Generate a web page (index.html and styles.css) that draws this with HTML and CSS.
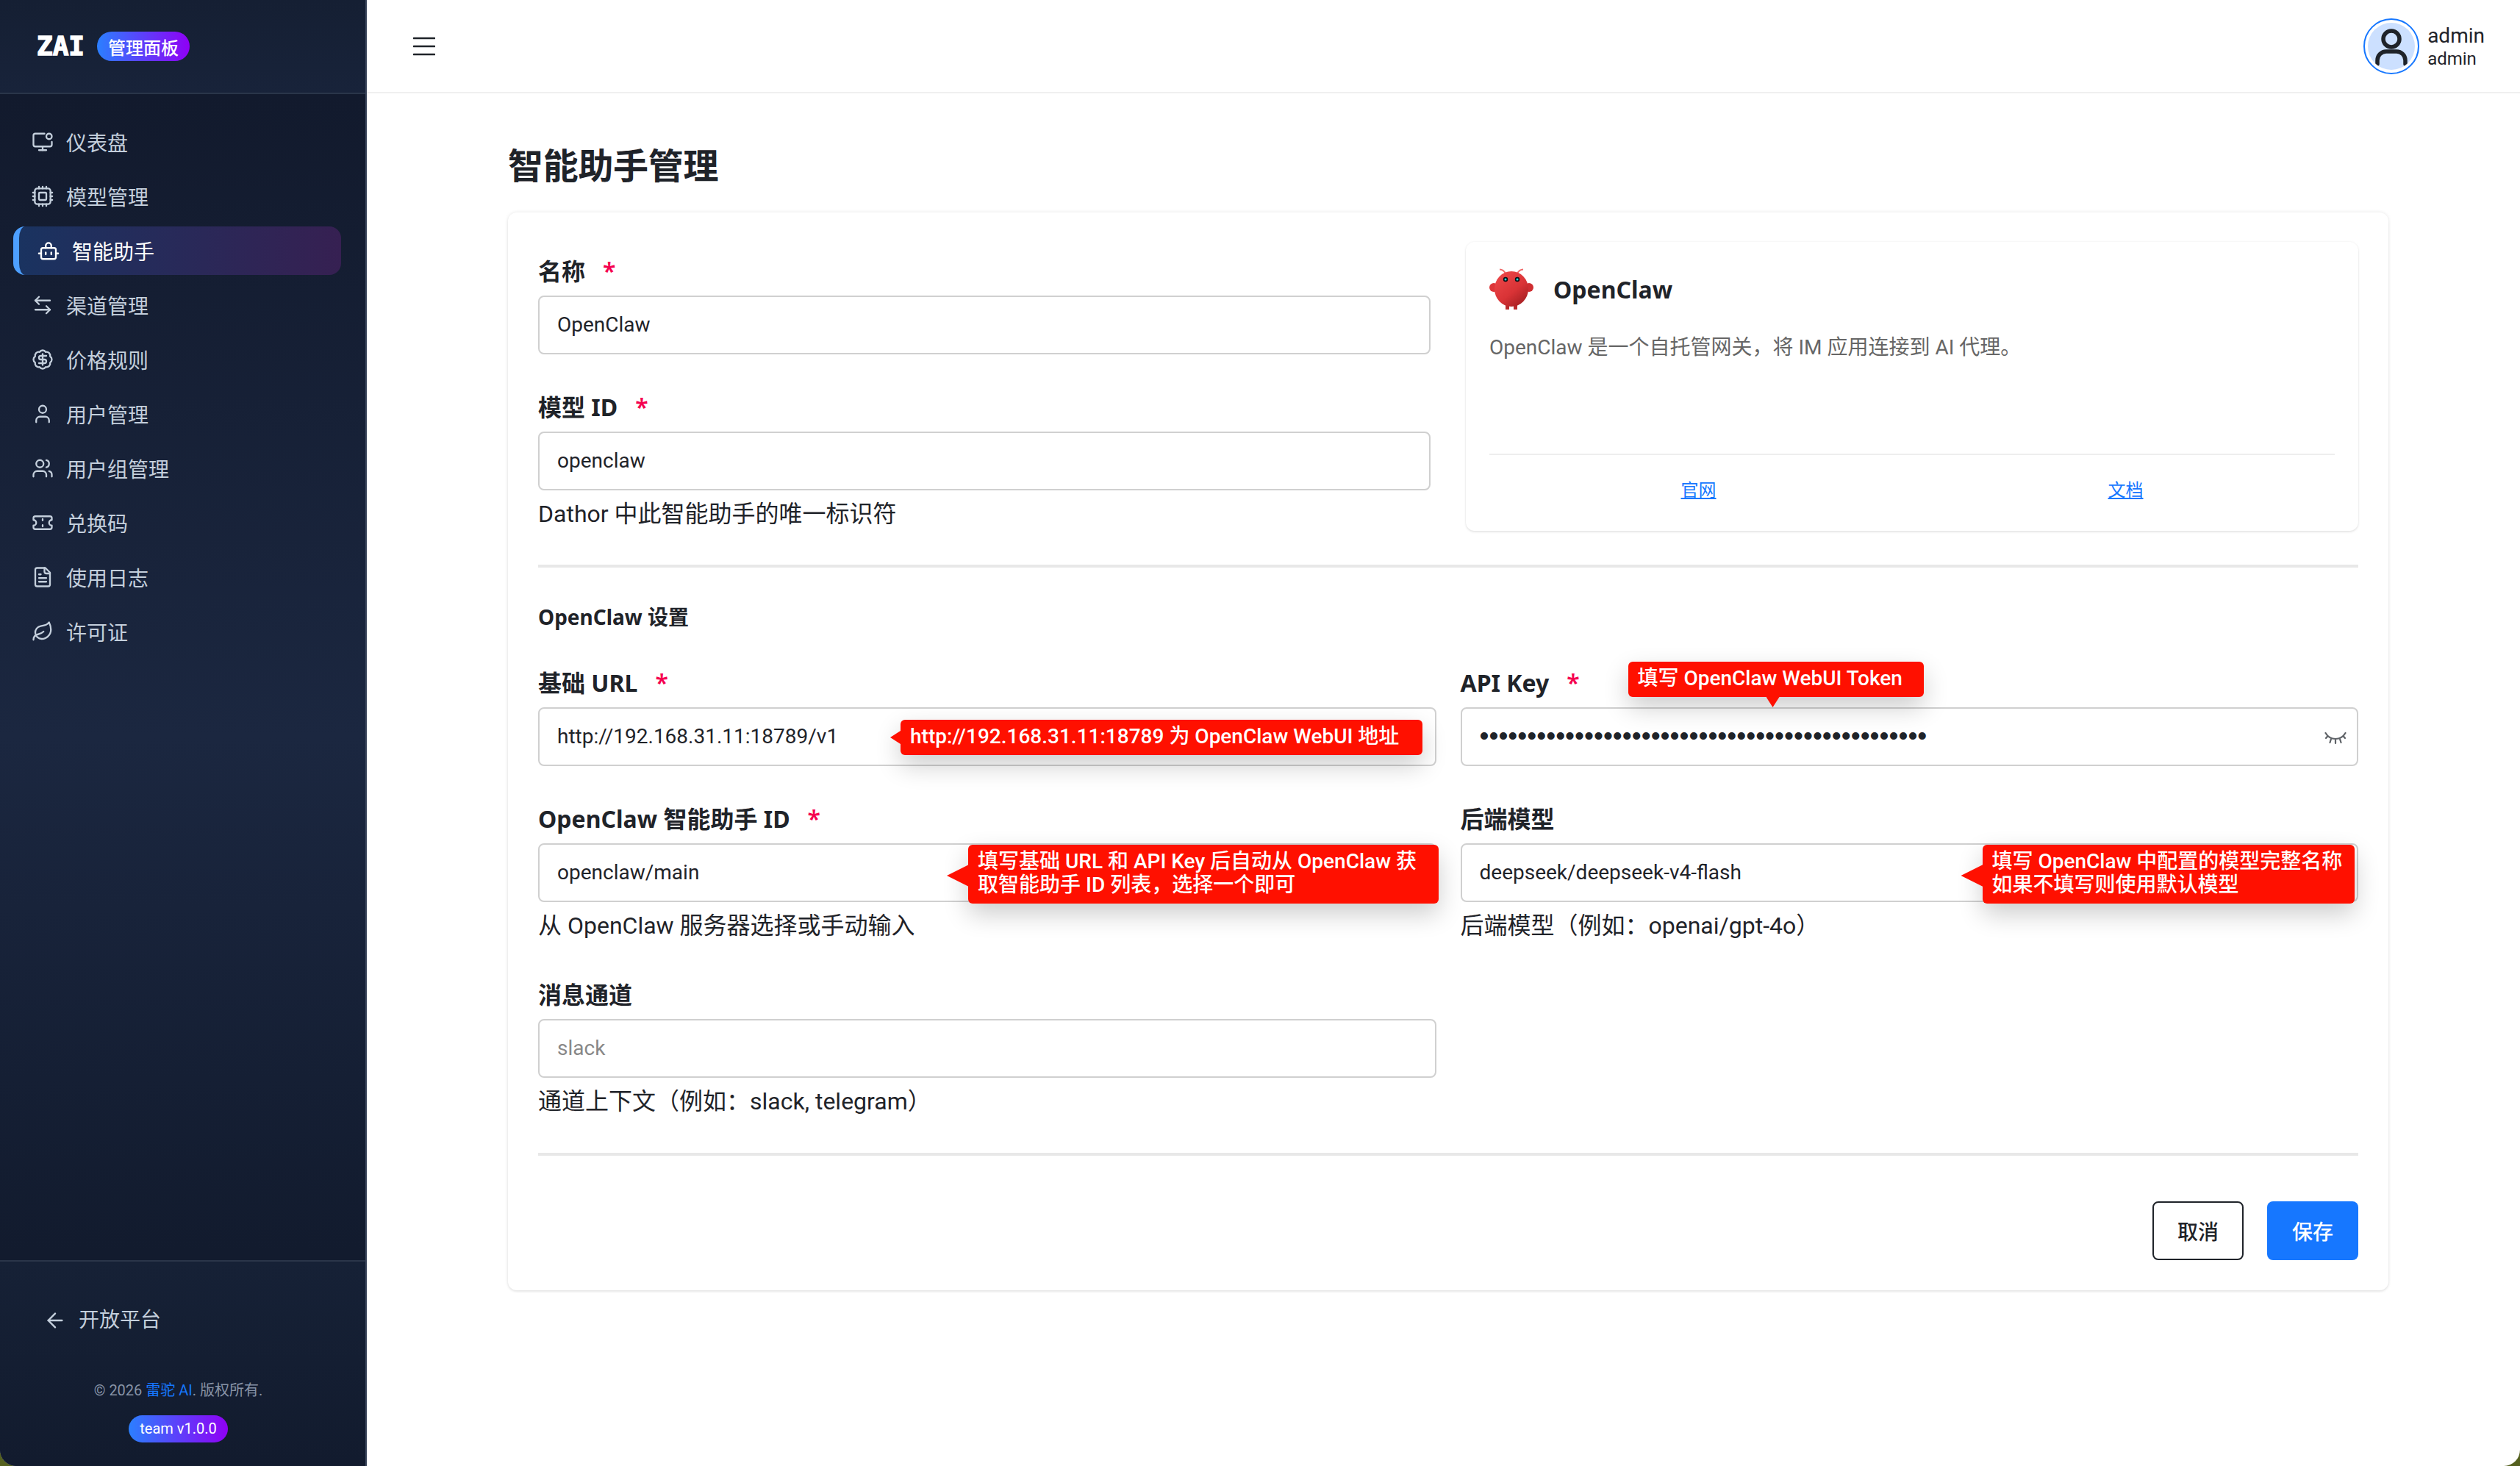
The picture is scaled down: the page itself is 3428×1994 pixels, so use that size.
FILE: index.html
```html
<!DOCTYPE html>
<html lang="zh-CN">
<head>
    <meta charset="UTF-8">
    <title>智能助手管理</title>
    <link rel="stylesheet" href="styles.css">
</head>
<body>
    <div class="app">
        <aside class="sidebar">
            <div class="brand">
                <span class="brand-logo">ZAI</span>
                <span class="brand-badge">管理面板</span>
            </div>
            <nav class="nav">
                <a class="nav-item">
                    <svg class="icon" viewBox="0 0 24 24"><circle cx="19" cy="6" r="3"/><path d="M22 12v3a2 2 0 0 1-2 2H4a2 2 0 0 1-2-2V5a2 2 0 0 1 2-2h10"/><path d="M8 21h8"/><path d="M12 17v4"/></svg>
                    仪表盘
                </a>
                <a class="nav-item">
                    <svg class="icon" viewBox="0 0 24 24"><rect x="3.500" y="3.500" width="17" height="17" rx="2.500"/><rect x="8" y="8" width="8" height="8" rx="1"/><path d="M8 1.500v2M12 1.500v2M16 1.500v2M8 20.500v2M12 20.500v2M16 20.500v2M1.500 8h2M1.500 12h2M1.500 16h2M20.500 8h2M20.500 12h2M20.500 16h2"/></svg>
                    模型管理
                </a>
                <a class="nav-item active">
                    <svg class="icon" viewBox="0 0 24 24"><path d="M9 9V6.500a3 3 0 0 1 6 0V9"/><rect x="4" y="9" width="16" height="12" rx="2"/><path d="M1.500 15h2.500M20 15h2.500M15 14v2M9 14v2"/></svg>
                    智能助手
                </a>
                <a class="nav-item">
                    <svg class="icon" viewBox="0 0 24 24"><path d="M8 3 4 7l4 4"/><path d="M4 7h16"/><path d="m16 21 4-4-4-4"/><path d="M20 17H4"/></svg>
                    渠道管理
                </a>
                <a class="nav-item">
                    <svg class="icon" viewBox="0 0 24 24"><path d="M3.850 8.620a4 4 0 0 1 4.780-4.770 4 4 0 0 1 6.740 0 4 4 0 0 1 4.780 4.780 4 4 0 0 1 0 6.740 4 4 0 0 1-4.770 4.780 4 4 0 0 1-6.750 0 4 4 0 0 1-4.780-4.770 4 4 0 0 1 0-6.760Z"/><path d="M16 8h-6a2 2 0 1 0 0 4h4a2 2 0 1 1 0 4H8"/><path d="M12 18V6"/></svg>
                    价格规则
                </a>
                <a class="nav-item">
                    <svg class="icon" viewBox="0 0 24 24"><path d="M19 21v-2a4 4 0 0 0-4-4H9a4 4 0 0 0-4 4v2"/><circle cx="12" cy="7" r="4"/></svg>
                    用户管理
                </a>
                <a class="nav-item">
                    <svg class="icon" viewBox="0 0 24 24"><path d="M16 21v-2a4 4 0 0 0-4-4H6a4 4 0 0 0-4 4v2"/><circle cx="9" cy="7" r="4"/><path d="M22 21v-2a4 4 0 0 0-3-3.870"/><path d="M16 3.130a4 4 0 0 1 0 7.750"/></svg>
                    用户组管理
                </a>
                <a class="nav-item">
                    <svg class="icon" viewBox="0 0 24 24"><path d="M2 9a3 3 0 0 1 0 6v2a2 2 0 0 0 2 2h16a2 2 0 0 0 2-2v-2a3 3 0 0 1 0-6V7a2 2 0 0 0-2-2H4a2 2 0 0 0-2 2Z"/><path d="M12 8v1.500M12 14.500V16"/></svg>
                    兑换码
                </a>
                <a class="nav-item">
                    <svg class="icon" viewBox="0 0 24 24"><path d="M15 2H6a2 2 0 0 0-2 2v16a2 2 0 0 0 2 2h12a2 2 0 0 0 2-2V7Z"/><path d="M14 2v4a2 2 0 0 0 2 2h4"/><path d="M10 9H8M16 13H8M16 17H8"/></svg>
                    使用日志
                </a>
                <a class="nav-item">
                    <svg class="icon" viewBox="0 0 24 24"><path d="M11 20A7 7 0 0 1 9.800 6.100C15.500 5 17 4.480 19 2c1 2 2 4.180 2 8 0 5.500-4.780 10-10 10Z"/><path d="M2 21c0-3 1.850-5.360 5.080-6C9.500 14.520 12 13 13 12"/></svg>
                    许可证
                </a>
            </nav>
            <div class="sidebar-foot">
                <a class="back-link">
                    <svg class="icon" viewBox="0 0 24 24"><path d="m12 19-7-7 7-7"/><path d="M19 12H5"/></svg>
                    开放平台
                </a>
                <p class="copyright">© 2026 <span class="brand-link">雷驼 AI</span>. 版权所有.</p>
                <span class="version">team v1.0.0</span>
            </div>
        </aside>

        <div class="main">
            <header class="topbar">
                <svg class="menu-icon" viewBox="0 0 30 30"><path d="M1 4h28M1 15h28M1 26h28"/></svg>
                <div class="user">
                    <span class="avatar">
                        <svg viewBox="0 0 64 64"><circle cx="32" cy="22" r="11"/><path d="M13 56V51a12 12 0 0 1 12-12h14a12 12 0 0 1 12 12v5"/></svg>
                    </span>
                    <span class="user-text">
                        <span class="user-name">admin</span>
                        <span class="user-role">admin</span>
                    </span>
                </div>
            </header>

            <main class="content">
                <h1 class="page-title">智能助手管理</h1>
                <form class="form-card">
                    <div class="top-row">
                        <div class="top-fields">
                            <div class="field">
                                <label class="label">名称<span class="req">*</span></label>
                                <div class="input-wrap"><input class="input" value="OpenClaw"></div>
                            </div>
                            <div class="field">
                                <label class="label">模型 ID<span class="req">*</span></label>
                                <div class="input-wrap"><input class="input" value="openclaw"></div>
                                <p class="help">Dathor 中此智能助手的唯一标识符</p>
                            </div>
                        </div>
                        <section class="info-card">
                            <div class="info-head">
                                <svg class="claw-logo" viewBox="0 0 60 56">
                                    <defs>
                                        <linearGradient id="clawBody" x1="0.2" y1="0.1" x2="0.85" y2="0.95">
                                            <stop offset="0" stop-color="#ea4446"/>
                                            <stop offset="0.55" stop-color="#d93336"/>
                                            <stop offset="1" stop-color="#a51f22"/>
                                        </linearGradient>
                                    </defs>
                                    <path class="claw-feeler" d="M22 7C20 3 17 1.500 14 1.500M38 7C40 3 43 1.500 46 1.500"/>
                                    <rect x="22" y="48" width="5" height="8" fill="#b92a2c"/>
                                    <rect x="33" y="48" width="5" height="8" fill="#b92a2c"/>
                                    <circle cx="6" cy="26" r="6" fill="#dd3538"/>
                                    <circle cx="54" cy="26" r="6" fill="#cf2e31"/>
                                    <ellipse cx="30" cy="28" rx="23" ry="24" fill="url(#clawBody)"/>
                                    <circle cx="22" cy="15" r="3.200" fill="#0b0f14"/>
                                    <circle cx="38" cy="15" r="3.200" fill="#0b0f14"/>
                                    <circle cx="22" cy="15" r="1.500" fill="#1fd6d6"/>
                                    <circle cx="38" cy="15" r="1.500" fill="#1fd6d6"/>
                                </svg>
                                <span class="info-name">OpenClaw</span>
                            </div>
                            <p class="info-desc">OpenClaw 是一个自托管网关，将 IM 应用连接到 AI 代理。</p>
                            <div class="info-links">
                                <a class="info-link">官网</a>
                                <a class="info-link">文档</a>
                            </div>
                        </section>
                    </div>

                    <div class="rule"></div>
                    <h2 class="section-title">OpenClaw 设置</h2>

                    <div class="settings-grid">
                        <div class="field">
                            <label class="label">基础 URL<span class="req">*</span></label>
                            <div class="input-wrap">
                                <input class="input" value="http://192.168.31.11:18789/v1">
                                <div class="callout callout-url">http://192.168.31.11:18789 为 OpenClaw WebUI 地址</div>
                            </div>
                        </div>
                        <div class="field">
                            <label class="label">API Key<span class="req">*</span></label>
                            <div class="input-wrap">
                                <input class="input input-secret" type="password" value="aaaaaaaaaaaaaaaaaaaaaaaaaaaaaaaaaaaaaaaaaaaaaaa">
                                <svg class="eye" viewBox="0 0 30 20"><path d="M1.500 3C5 9 9.500 11 15 11S25 9 28.500 3M9 11l-1.500 5M15 12v5M21 11l1.500 5M4.500 7 2 10M25.500 7 28 10"/></svg>
                                <div class="callout callout-key">填写 OpenClaw WebUI Token</div>
                            </div>
                        </div>
                        <div class="field">
                            <label class="label">OpenClaw 智能助手 ID<span class="req">*</span></label>
                            <div class="input-wrap">
                                <input class="input" value="openclaw/main">
                                <div class="callout callout-agent">填写基础 URL 和 API Key 后自动从 OpenClaw 获<br>取智能助手 ID 列表，选择一个即可</div>
                            </div>
                            <p class="help">从 OpenClaw 服务器选择或手动输入</p>
                        </div>
                        <div class="field">
                            <label class="label">后端模型</label>
                            <div class="input-wrap">
                                <input class="input" value="deepseek/deepseek-v4-flash">
                                <div class="callout callout-model">填写 OpenClaw 中配置的模型完整名称<br>如果不填写则使用默认模型</div>
                            </div>
                            <p class="help">后端模型（例如：openai/gpt-4o）</p>
                        </div>
                        <div class="field">
                            <label class="label">消息通道</label>
                            <div class="input-wrap"><input class="input" placeholder="slack"></div>
                            <p class="help">通道上下文（例如：slack, telegram）</p>
                        </div>
                    </div>

                    <div class="rule rule-bottom"></div>
                    <div class="actions">
                        <button type="button" class="btn btn-cancel">取消</button>
                        <button type="button" class="btn btn-save">保存</button>
                    </div>
                </form>
            </main>
        </div>
    </div>
</body>
</html>
```

FILE: styles.css
```css
:root {
    --text: #1f2329;
    --blue: #1677ff;
    --line: #e8e8e8;
    --callout-red: #ff1000;
    --badge-gradient: linear-gradient(90deg, #2b7fff, #8f00f5);
    --body-font: Roboto, "Noto Sans CJK SC", sans-serif;
    --heading-font: "Noto Sans", "Noto Sans CJK SC", sans-serif;
}

* {
    box-sizing: border-box;
}

html, body {
    margin: 0;
    padding: 0;
    height: 100%;
    overflow: hidden;
    background: #55611f;
    font-family: var(--body-font);
    font-size: 28px;
    color: var(--text);
}

.app {
    display: flex;
    height: 1994px;
    background: #fff;
    border-radius: 0 0 22px 22px;
    overflow: hidden;
}

/* sidebar */
.sidebar {
    width: 499px;
    flex: none;
    display: flex;
    flex-direction: column;
    border-right: 2px solid #3b465c;
    background: linear-gradient(180deg, #121a2d 130px, #1b2740 1000px, #121b2e 1700px);
    color: #c4cfdc;
}

.brand {
    height: 128px;
    display: flex;
    align-items: center;
    padding: 0 0 0 50px;
    gap: 17px;
    background: linear-gradient(180deg, #151f33, #18233a);
    border-bottom: 2px solid #2a3549;
}

.brand-logo {
    font-family: "DejaVu Sans Mono", monospace;
    font-weight: 700;
    font-size: 36px;
    line-height: 40px;
    color: #fff;
    -webkit-text-stroke: 1.500px #fff;
}

.brand-badge {
    display: flex;
    align-items: center;
    height: 40px;
    padding: 0 15px;
    border-radius: 20px;
    background: var(--badge-gradient);
    color: #fff;
    font-size: 24px;
    font-weight: 500;
}

.nav {
    display: flex;
    flex-direction: column;
    gap: 8px;
    padding: 32px 33px 0 18px;
}

.nav-item {
    height: 66px;
    display: flex;
    align-items: center;
    gap: 17px;
    padding-left: 25px;
    border-radius: 16px;
}

.nav-item.active {
    border-left: 8px solid #4d9fff;
    background: linear-gradient(90deg, #1a3360, #362052);
    color: #fff;
}

.icon {
    width: 30px;
    height: 30px;
    flex: none;
    fill: none;
    stroke: currentColor;
    stroke-width: 1.850;
    stroke-linecap: round;
    stroke-linejoin: round;
}

.sidebar-foot {
    margin-top: auto;
    height: 280px;
    display: flex;
    flex-direction: column;
    align-items: center;
    padding-right: 12px;
    border-top: 2px solid #2a3549;
    background: linear-gradient(180deg, #162136, #121b2e);
}

.back-link {
    align-self: flex-start;
    display: flex;
    align-items: center;
    gap: 16px;
    margin: 64px 0 0 59px;
    line-height: 32px;
}

.back-link .icon {
    width: 32px;
    height: 32px;
}

.copyright {
    margin: 65px 0 0;
    font-size: 20px;
    line-height: 28px;
    color: #8793a6;
}

.brand-link {
    color: var(--blue);
}

.version {
    margin-top: 20px;
    height: 37px;
    line-height: 36px;
    padding: 0 15px;
    border-radius: 19px;
    background: var(--badge-gradient);
    color: #fff;
    font-size: 20px;
}

/* main area */
.main {
    flex: 1;
    min-width: 0;
    display: flex;
    flex-direction: column;
}

.topbar {
    height: 127px;
    flex: none;
    display: flex;
    align-items: center;
    justify-content: space-between;
    padding: 0 48px 0 63px;
    border-bottom: 2px solid #f0f0f0;
}

.menu-icon {
    width: 30px;
    height: 30px;
    fill: none;
    stroke: var(--text);
    stroke-width: 2.600;
    stroke-linecap: round;
}

.user {
    display: flex;
    align-items: center;
    gap: 11px;
}

.avatar {
    width: 76px;
    height: 76px;
    padding: 4px;
    border: 2px solid var(--blue);
    border-radius: 50%;
    overflow: hidden;
}

.avatar svg {
    display: block;
    width: 100%;
    height: 100%;
    border-radius: 50%;
    background: #cce0ff;
    fill: none;
    stroke: var(--text);
    stroke-width: 5.500;
    stroke-linecap: round;
}

.user-text {
    display: flex;
    flex-direction: column;
    padding-top: 2px;
}

.user-name {
    font-size: 28px;
    line-height: 32px;
}

.user-role {
    font-size: 24px;
    line-height: 30px;
}

.content {
    padding: 66px 179px 0 192px;
}

.page-title {
    margin: 0 0 32px;
    font-family: var(--heading-font);
    font-size: 48px;
    line-height: 64px;
    font-weight: 600;
    letter-spacing: -0.300px;
}

.form-card {
    padding: 40px 41px 41px;
    border-radius: 12px;
    background: #fff;
    box-shadow: 0 0 5px rgba(0, 0, 0, 0.1), 0 2px 3px rgba(0, 0, 0, 0.06);
}

.top-row {
    display: grid;
    grid-template-columns: 1fr 1fr;
    gap: 48px;
}

.top-fields {
    display: flex;
    flex-direction: column;
    gap: 50px;
    padding-top: 18px;
}

.label {
    display: block;
    margin-bottom: 11px;
    font-family: var(--heading-font);
    font-size: 32px;
    line-height: 44px;
    font-weight: 700;
}

.req {
    margin-left: 24px;
    font-weight: 600;
    color: #f5004f;
}

.input-wrap {
    position: relative;
}

.input {
    display: block;
    width: 100%;
    height: 80px;
    padding: 0 24px 2px;
    border: 2px solid #d0d0d0;
    border-radius: 8px;
    outline: none;
    background: #fff;
    font: inherit;
    color: var(--text);
}

.input-secret {
    font-family: "Liberation Sans", sans-serif;
    font-size: 37px;
}

.input::placeholder {
    color: #888;
}

.help {
    margin: 10px 0 0;
    font-size: 32px;
    line-height: 44px;
}

.info-card {
    height: 393px;
    display: flex;
    flex-direction: column;
    padding: 36px 32px 0;
    border-radius: 12px;
    box-shadow: 0 0 3px rgba(0, 0, 0, 0.08), 0 2px 3px rgba(0, 0, 0, 0.08);
}

.info-head {
    display: flex;
    align-items: center;
    gap: 27px;
    height: 56px;
}

.claw-logo {
    width: 60px;
    height: 56px;
    flex: none;
}

.claw-feeler {
    fill: none;
    stroke: #ef6a6a;
    stroke-width: 2;
}

.info-name {
    font-family: var(--heading-font);
    font-size: 32px;
    font-weight: 700;
}

.info-desc {
    margin: 30px 0 0;
    line-height: 44px;
    color: #666;
}

.info-links {
    margin-top: auto;
    height: 105px;
    display: grid;
    grid-template-columns: 1fr 1fr;
    gap: 12px;
    padding-top: 28px;
    border-top: 2px solid #eee;
    text-align: center;
}

.info-link {
    font-size: 24px;
    line-height: 40px;
    color: var(--blue);
    text-decoration: underline;
}

.rule {
    height: 4px;
    margin-top: 46px;
    background: var(--line);
}

.rule-bottom {
    margin-top: 48px;
}

.section-title {
    margin: 47px 0 48px;
    font-family: var(--heading-font);
    font-size: 28px;
    line-height: 40px;
    font-weight: 700;
}

.settings-grid {
    display: grid;
    grid-template-columns: 1fr 1fr;
    gap: 50px 33px;
}

.eye {
    position: absolute;
    right: 16px;
    top: 32px;
    width: 30px;
    height: 20px;
    fill: none;
    stroke: #5f6368;
    stroke-width: 2.200;
    stroke-linecap: round;
}

/* red notes laid over the inputs */
.callout {
    position: absolute;
    padding: 0 13px;
    border-radius: 6px;
    background: var(--callout-red);
    color: #fff;
    font-weight: 500;
    white-space: nowrap;
    box-shadow: 0 14px 34px rgba(0, 0, 0, 0.2);
}

.callout::before {
    content: "";
    position: absolute;
    background: var(--callout-red);
}

.callout-url {
    left: 493px;
    top: 17px;
    width: 710px;
    height: 48px;
    line-height: 46px;
}

.callout-url::before {
    left: -14px;
    top: 15px;
    width: 14px;
    height: 18px;
    clip-path: polygon(0 50%, 100% 0, 100% 100%);
}

.callout-key {
    left: 228px;
    top: -62px;
    width: 402px;
    height: 48px;
    line-height: 46px;
}

.callout-key::before {
    left: 188px;
    top: 48px;
    width: 18px;
    height: 14px;
    clip-path: polygon(0 0, 100% 0, 50% 100%);
}

.callout-agent,
.callout-model {
    top: 2px;
    height: 80px;
    padding-top: 7px;
    line-height: 32px;
}

.callout-agent {
    left: 585px;
    width: 640px;
}

.callout-model {
    left: 710px;
    width: 506px;
}

.callout-agent::before,
.callout-model::before {
    top: 27px;
    left: -29px;
    width: 30px;
    height: 30px;
    clip-path: polygon(0 50%, 100% 0, 100% 100%);
}

.actions {
    display: flex;
    justify-content: flex-end;
    gap: 32px;
    margin-top: 62px;
}

.btn {
    width: 124px;
    height: 80px;
    border-radius: 8px;
    font: inherit;
    font-weight: 500;
}

.btn-cancel {
    border: 2px solid var(--text);
    background: #fff;
    color: var(--text);
}

.btn-save {
    border: none;
    background: var(--blue);
    color: #fff;
}
```
